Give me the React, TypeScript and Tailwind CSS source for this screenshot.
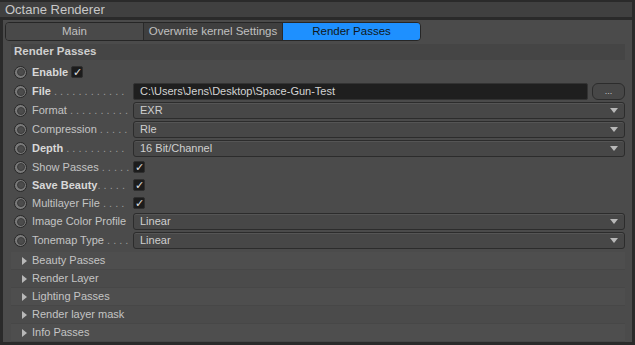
const font = { fontFamily: '"Liberation Sans", Arial, sans-serif' }

type Row =
  | { kind: 'check'; label: string; bold?: boolean; dots: string; inline?: boolean; h: string }
  | { kind: 'select'; label: string; bold?: boolean; dots: string; value: string; h: string }
  | { kind: 'file'; label: string; bold?: boolean; dots: string; value: string; h: string }

const rows: Row[] = [
  { kind: 'check', label: 'Enable', bold: true, dots: '', inline: true, h: 'h-[20px]' },
  { kind: 'file', label: 'File', bold: true, dots: ' . . . . . . . . . . . .', value: 'C:\\Users\\Jens\\Desktop\\Space-Gun-Test', h: 'h-[19px]' },
  { kind: 'select', label: 'Format', dots: ' . . . . . . . . . .', value: 'EXR', h: 'h-[19px]' },
  { kind: 'select', label: 'Compression', dots: ' . . . . .', value: 'Rle', h: 'h-[19px]' },
  { kind: 'select', label: 'Depth', bold: true, dots: ' . . . . . . . . . .', value: '16 Bit/Channel', h: 'h-[19px]' },
  { kind: 'check', label: 'Show Passes', dots: ' . . . . .', h: 'h-[18px]' },
  { kind: 'check', label: 'Save Beauty', bold: true, dots: '. . . . .', h: 'h-[18px]' },
  { kind: 'check', label: 'Multilayer File', dots: ' . . . .', h: 'h-[18px]' },
  { kind: 'select', label: 'Image Color Profile', dots: '', value: 'Linear', h: 'h-[19px]' },
  { kind: 'select', label: 'Tonemap Type', dots: ' . . . .', value: 'Linear', h: 'h-[19px]' },
]

const groups = ['Beauty Passes', 'Render Layer', 'Lighting Passes', 'Render layer mask', 'Info Passes']

function Radio() {
  return (
    <div className="w-[13px] h-[13px] rounded-full border border-[#262626] bg-[#7a7a7a] flex items-center justify-center shrink-0">
      <div className="w-[8px] h-[8px] rounded-full bg-[#4c4c4c] border border-[#3c3c3c]" />
    </div>
  )
}

function Check() {
  return (
    <div className="w-[12px] h-[12px] rounded-[2px] bg-[#1c1c1c] border border-[#2e2e2e] flex items-center justify-center text-[11px] leading-none text-[#e0e0e0]">
      ✓
    </div>
  )
}

function Label({ row }: { row: Row }) {
  return (
    <div className={`w-[96px] whitespace-nowrap text-[11px] ${row.bold ? 'font-bold text-[#d8d8d8]' : 'text-[#c4c4c4]'}`}>
      {row.label}
      <span className="font-normal text-[#9a9a9a]">{row.dots}</span>
    </div>
  )
}

export default function App() {
  return (
    <div className="w-[635px] h-[345px] bg-[#2a2a2a] flex flex-col pt-[2px] overflow-hidden" style={font}>
      <div className="h-[15px] bg-[#404040] mr-[3px] flex items-center px-[5px] text-[13px] text-[#c8c8c8]">
        Octane Renderer
      </div>
      <div className="flex-1 mt-[3px] ml-[3px] mr-[3px] mb-[3px] bg-[#4b4b4b] flex flex-col">
        <div className="mt-[2px] ml-[2px] w-[416px] h-[19px] flex rounded-[4px] border border-[#262626] overflow-hidden text-[11.5px]">
          <div className="w-[138px] flex items-center justify-center bg-[#494949] text-[#c0c0c0] border-r border-[#2a2a2a]">Main</div>
          <div className="w-[139px] flex items-center justify-center bg-[#3f3f3f] text-[#c0c0c0] border-r border-[#2a2a2a]">Overwrite kernel Settings</div>
          <div className="flex-1 flex items-center justify-center bg-[#1e90ff] text-[#101820]">Render Passes</div>
        </div>
        <div className="mt-[3px] ml-[8px] mr-[7px] h-[16px] bg-[#454545] flex items-center px-[3px] text-[11.5px] font-bold text-[#cfcfcf]">
          Render Passes
        </div>
        <div className="flex flex-col ml-[11px] mr-[7px] mt-[2px]">
          {rows.map((row, i) => (
            <div key={i} className={`flex items-center gap-[5px] ${row.h}`}>
              <Radio />
              {row.kind === 'check' && row.inline ? (
                <div className="flex items-center gap-[3px]">
                  <span className="text-[11px] font-bold text-[#d8d8d8]">{row.label}</span>
                  <Check />
                </div>
              ) : (
                <>
                  <Label row={row} />
                  {row.kind === 'check' && <Check />}
                  {row.kind === 'select' && (
                    <div className="flex-1 h-[17px] rounded-[3px] border border-[#2c2c2c] bg-[#474747] flex items-center justify-between pl-[6px] pr-[6px] text-[11px] text-[#cfcfcf] shadow-[inset_0_1px_0_#555]">
                      <span>{row.value}</span>
                      <svg width="8" height="5" viewBox="0 0 8 5"><path d="M0 0H8L4 5Z" fill="#b8b8b8" /></svg>
                    </div>
                  )}
                  {row.kind === 'file' && (
                    <div className="flex-1 flex items-center gap-[4px]">
                      <div className="flex-1 h-[17px] rounded-[2px] border border-[#333] bg-[#1f1f1f] flex items-center pl-[6px] text-[11px] text-[#d4d4d4]">
                        {row.value}
                      </div>
                      <div className="w-[33px] h-[17px] rounded-[6px] border border-[#2c2c2c] bg-[#474747] flex items-end justify-center pb-[3px] text-[9px] leading-none text-[#c8c8c8]">
                        ...
                      </div>
                    </div>
                  )}
                </>
              )}
            </div>
          ))}
        </div>
        <div className="flex flex-col ml-[8px] mr-[7px] mt-[2px]">
          {groups.map((g, i) => (
            <div key={g} className={`h-[18px] flex items-center gap-[5px] pl-[11px] text-[11px] text-[#c4c4c4] border-b border-[#474747] ${i % 2 === 0 ? 'bg-[#4e4e4e]' : 'bg-[#4b4b4b]'}`}>
              <svg width="5" height="8" viewBox="0 0 5 8"><path d="M0 0L5 4L0 8Z" fill="#b8b8b8" /></svg>
              {g}
            </div>
          ))}
        </div>
      </div>
    </div>
  )
}
